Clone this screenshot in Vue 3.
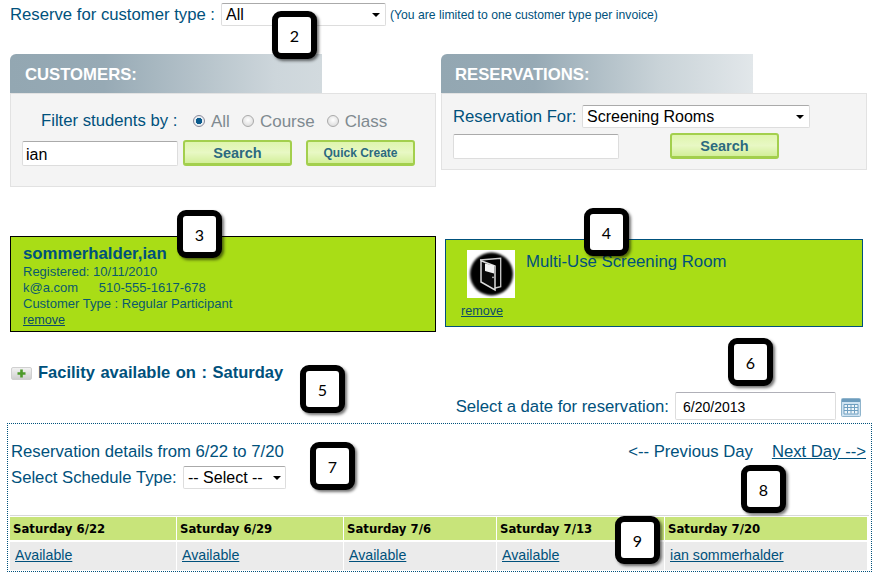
<script setup>
const days = [
  { head: 'Saturday 6/22', link: 'Available' },
  { head: 'Saturday 6/29', link: 'Available' },
  { head: 'Saturday 7/6', link: 'Available' },
  { head: 'Saturday 7/13', link: 'Available' },
  { head: 'Saturday 7/20', link: 'ian sommerhalder' }
]
const callouts = [
  { n: 2, x: 272, y: 11 },
  { n: 3, x: 177, y: 210 },
  { n: 4, x: 584, y: 208 },
  { n: 5, x: 300, y: 365 },
  { n: 6, x: 728, y: 338 },
  { n: 7, x: 310, y: 442 },
  { n: 8, x: 741, y: 465 },
  { n: 9, x: 615, y: 516 }
]
</script>

<template>
  <div class="page">
    <div class="top">
      <span class="top-label">Reserve for customer type :</span>
      <div class="sel sel-all"><span>All</span><i class="caret"></i></div>
      <span class="note">(You are limited to one customer type per invoice)</span>
    </div>

    <div class="panels">
      <section class="col">
        <div class="tab tab-c">CUSTOMERS:</div>
        <div class="panel panel-c">
          <div class="filter">
            <span class="filter-label">Filter students by :</span>
            <span class="radio on"></span><span class="opt">All</span>
            <span class="radio"></span><span class="opt">Course</span>
            <span class="radio"></span><span class="opt">Class</span>
          </div>
          <div class="search-row">
            <div class="inp inp-c">ian</div>
            <div class="btn">Search</div>
            <div class="btn btn-q">Quick Create</div>
          </div>
        </div>
      </section>
      <section class="col">
        <div class="tab tab-r">RESERVATIONS:</div>
        <div class="panel panel-r">
          <div class="res-row">
            <span class="res-label">Reservation For:</span>
            <div class="sel sel-res"><span>Screening Rooms</span><i class="caret"></i></div>
          </div>
          <div class="search-row r2">
            <div class="inp inp-r"></div>
            <div class="btn btn-r">Search</div>
          </div>
        </div>
      </section>
    </div>

    <div class="cards">
      <div class="card card-l">
        <div class="name">sommerhalder,ian</div>
        <div class="line">Registered: 10/11/2010</div>
        <div class="line">k@a.com <span class="phone">510-555-1617-678</span></div>
        <div class="line">Customer Type : Regular Participant</div>
        <a class="line rm">remove</a>
      </div>
      <div class="card card-r">
        <div class="room">
          <svg class="door" width="48" height="48" viewBox="0 0 48 48">
            <defs>
              <filter id="soft" x="-10%" y="-10%" width="120%" height="120%"><feGaussianBlur stdDeviation="0.8" /></filter>
            </defs>
            <rect width="48" height="48" fill="#fff" />
            <circle cx="24.500" cy="24" r="21.500" fill="#000" filter="url(#soft)" />
            <path d="M13 10 L33.700 8.300 V36.700 L28 38" fill="none" stroke="#ccc" stroke-width="1.300" />
            <path d="M14 10.700 L28 16 V40 L14 32 Z" fill="#0a0a0a" stroke="#ddd" stroke-width="1.500" />
            <path d="M18 13.500 L27 15.500 V23.500 L18 21 Z" fill="#f2f2f2" />
            <circle cx="26" cy="27.300" r="0.900" fill="#ccc" />
          </svg>
          <span class="room-name">Multi-Use Screening Room</span>
        </div>
        <a class="rm rm-r">remove</a>
      </div>
    </div>

    <div class="avail">
      <div class="fac">
        <span class="plus"><svg width="9" height="9" viewBox="0 0 9 9"><path d="M3.200 0.500h2.600v2.700h2.700v2.600H5.800v2.700H3.200V5.800H0.500V3.200h2.700z" fill="#4d9a2a" /></svg></span>
        <b>Facility available on : Saturday</b>
      </div>
      <div class="date">
        <span class="date-label">Select a date for reservation:</span>
        <div class="inp inp-d">6/20/2013</div>
        <svg class="cal" width="20" height="19" viewBox="0 0 20 19">
          <rect x="0.500" y="0.500" width="19" height="18" rx="1" fill="#cfe3f2" stroke="#8fb4cc" />
          <rect x="1" y="1" width="18" height="3" fill="#6d9cbd" />
          <path d="M3 6.500h14v9.500H3z" fill="#eef5fa" stroke="#6f9fc0" />
          <path d="M3 9.500h14M3 12.500h14M6.500 6.500v9M10 6.500v9M13.500 6.500v9" stroke="#6f9fc0" fill="none" />
        </svg>
      </div>
    </div>

    <div class="details">
      <div class="d-head">
        <div class="d-left">
          <div class="d-title">Reservation details from 6/22 to 7/20</div>
          <div class="d-type">
            <span class="type-label">Select Schedule Type:</span>
            <div class="sel sel-type"><span>-- Select --</span><i class="caret"></i></div>
          </div>
        </div>
        <div class="d-nav">
          <span>&lt;-- Previous Day</span>
          <a>Next Day --&gt;</a>
        </div>
      </div>
      <div class="grid">
        <div v-for="d in days" :key="d.head" class="gh">{{ d.head }}</div>
        <div v-for="d in days" :key="d.head + 'c'" class="gc"><a>{{ d.link }}</a></div>
      </div>
    </div>

    <div v-for="c in callouts" :key="c.n" class="callout" :style="{ left: c.x + 'px', top: c.y + 'px' }">{{ c.n }}</div>
  </div>
</template>

<style scoped>
.page {
  position: relative;
  width: 877px;
  height: 574px;
  overflow: hidden;
  background: #fff;
  font-family: "Liberation Sans", Arial, sans-serif;
  font-size: 16.700px;
  color: #00517c;
}
.top {
  display: flex;
  align-items: center;
  height: 23px;
  padding-top: 3px;
  padding-left: 10px;
}
.top-label { width: 211px; }
.sel {
  display: flex;
  align-items: center;
  justify-content: space-between;
  box-sizing: border-box;
  background: #fff;
  border: 1px solid #ddd;
  border-top-color: #aaa;
  border-radius: 2px;
  color: #000;
  font-size: 16px;
  padding: 0 5px 0 4px;
}
.caret {
  width: 0;
  height: 0;
  border-left: 4px solid transparent;
  border-right: 4px solid transparent;
  border-top: 4px solid #000;
}
.sel-all { width: 165px; height: 23px; }
.note { margin-left: 4px; font-size: 12.200px; }
.panels {
  display: flex;
  gap: 5px;
  align-items: flex-start;
  margin-top: 28px;
  padding-left: 10px;
}
.col { width: 426px; }
.tab {
  width: 312px;
  height: 39px;
  box-sizing: border-box;
  padding: 11px 0 0 15px;
  border-top-left-radius: 6px;
  color: #fff;
  font-weight: 700;
}
.tab-r { padding-left: 14px; }
.tab-c { background: linear-gradient(90deg, #93a7b2 0%, #97aab5 30%, #cdd6db 85%, #d2dade 100%); }
.tab-r { background: linear-gradient(90deg, #93a7b2 0%, #97aab5 30%, #c9d3d8 70%, #e2e7ea 100%); }
.panel {
  box-sizing: border-box;
  width: 426px;
  background: #f4f4f4;
  border: 1px solid #e2e2e2;
}
.panel-c { height: 94px; padding: 15px 0 0 11px; }
.filter {
  display: flex;
  align-items: center;
  height: 24px;
  padding-left: 19px;
}
.filter-label { width: 152px; }
.radio {
  box-sizing: border-box;
  flex: none;
  width: 12px;
  height: 12px;
  margin-right: 6px;
  border-radius: 50%;
  border: 1px solid #aaa;
  background: radial-gradient(circle at 50% 40%, #fff, #d4d4d4);
}
.radio.on { background: radial-gradient(circle, #0a5a8c 0 3px, #e8eef2 3.500px); border-color: #889; }
.opt { margin-right: 12px; margin-top: 2px; font-size: 17px; color: #7f8a90; }
.search-row {
  display: flex;
  align-items: center;
  margin-top: 7px;
}
.inp {
  box-sizing: border-box;
  background: #fff;
  border: 1px solid #ddd;
  border-top-color: #aaa;
  border-radius: 2px;
  color: #000;
  font-size: 16px;
  padding-left: 3px;
}
.inp-c { width: 156px; height: 25px; line-height: 25px; }
.btn {
  box-sizing: border-box;
  width: 109px;
  height: 26px;
  margin-left: 5px;
  line-height: 22px;
  text-align: center;
  border: 2px solid #a3cf4d;
  border-bottom-width: 3px;
  border-radius: 3px;
  background: linear-gradient(#dff5ae, #e8f8c4 50%, #d3ef9a);
  color: #2c6a7f;
  font-size: 14.500px;
  font-weight: 700;
}
.btn-q { margin-left: 14px; font-size: 12px; }
.panel-r { height: 77px; padding: 11px 0 0 11px; }
.res-row {
  display: flex;
  align-items: center;
}
.res-label { width: 129px; }
.sel-res { width: 228px; height: 23px; }
.r2 { margin-top: 5px; }
.inp-r { width: 166px; height: 25px; }
.btn-r { margin-left: 51px; }
.cards {
  display: flex;
  align-items: flex-start;
  margin-top: 49px;
  padding-left: 10px;
}
.card {
  box-sizing: border-box;
  background: #a9dd16;
  color: #0a5a6c;
}
.card-l {
  width: 426px;
  height: 96px;
  padding: 7px 0 0 12px;
  border: 1px solid #000;
  font-size: 13px;
}
.name { color: #00517c; font-size: 16.800px; font-weight: 700; line-height: 20px; }
.line { display: block; line-height: 16px; }
.phone { margin-left: 17px; }
.rm { color: #0a4c6a; font-size: 12.600px; text-decoration: underline; line-height: 16px; }
.card-r {
  width: 418px;
  height: 88px;
  margin-left: 9px;
  margin-top: 3px;
  padding: 10px 0 0 15px;
  border: 1px solid #00517c;
}
.room { display: flex; align-items: flex-start; padding-left: 6px; }
.door { display: block; flex: none; }
.room-name { margin-left: 11px; margin-top: 2px; color: #00517c; font-size: 16.800px; line-height: 20px; }
.rm-r { display: block; margin-top: 5px; }
.avail {
  display: flex;
  justify-content: space-between;
  align-items: flex-start;
  height: 57px;
  margin-top: 34px;
}
.fac {
  display: flex;
  align-items: center;
  height: 14px;
  padding-left: 11px;
}
.fac b { font-size: 16.500px; word-spacing: 1px; white-space: nowrap; margin-top: -1px; }
.plus {
  box-sizing: border-box;
  display: flex;
  align-items: center;
  justify-content: center;
  width: 21px;
  height: 13px;
  margin-right: 6px;
  border: 1px solid #d0d0d0;
  border-radius: 2px;
  background: linear-gradient(#f2f2f2, #cfcfcf);
}
.date {
  display: flex;
  align-items: center;
  height: 28px;
  margin-top: 26px;
  padding-right: 16px;
}
.date-label { margin-top: 2px; margin-right: 1px; }
.inp-d {
  width: 161px;
  height: 28px;
  line-height: 28px;
  margin-left: 5px;
  padding-left: 7px;
  font-size: 14px;
  border-color: #ddd;
  border-top-color: #b0b0b8;
}
.cal { margin-left: 5px; margin-top: 2px; }
.details {
  box-sizing: border-box;
  width: 865px;
  height: 149px;
  margin-left: 7px;
  border: 1px dotted #00517c;
  padding: 1px 2px 0 2px;
}
.d-head {
  box-sizing: border-box;
  display: flex;
  justify-content: space-between;
  align-items: flex-start;
  height: 90px;
  padding: 17px 3px 0 1px;
}
.d-title { line-height: 20px; }
.d-type { display: flex; align-items: center; margin-top: 4px; }
.type-label { width: 172px; }
.sel-type { width: 103px; height: 23px; padding-right: 4px; }
.d-nav { display: flex; gap: 19px; line-height: 20px; }
.d-nav a { text-decoration: underline; }
.grid {
  display: grid;
  grid-template-columns: 166px 166px 152px 167px 202px;
  column-gap: 1px;
  row-gap: 2px;
  padding: 1px 0 0 0;
  border-top: 1px solid #d8d8d8;
  width: 859px;
}
.gh {
  height: 23px;
  padding-left: 3px;
  background: #c8e47a;
  color: #000;
  font-family: "DejaVu Sans", Verdana, sans-serif;
  font-size: 11.700px;
  font-weight: 700;
  line-height: 25px;
}
.gc {
  height: 28px;
  padding-left: 5px;
  background: #ebebeb;
  font-size: 14.200px;
  line-height: 26px;
}
.gc a { color: #00517c; text-decoration: underline; }
.callout {
  position: absolute;
  box-sizing: border-box;
  width: 45px;
  height: 48px;
  display: flex;
  align-items: center;
  justify-content: center;
  background: #fff;
  border: 6px solid #000;
  border-radius: 9px;
  box-shadow: 2px 2px 3px rgba(0, 0, 0, 0.55);
  color: #000;
  font-family: Lato, sans-serif;
  font-size: 16px;
}
</style>
